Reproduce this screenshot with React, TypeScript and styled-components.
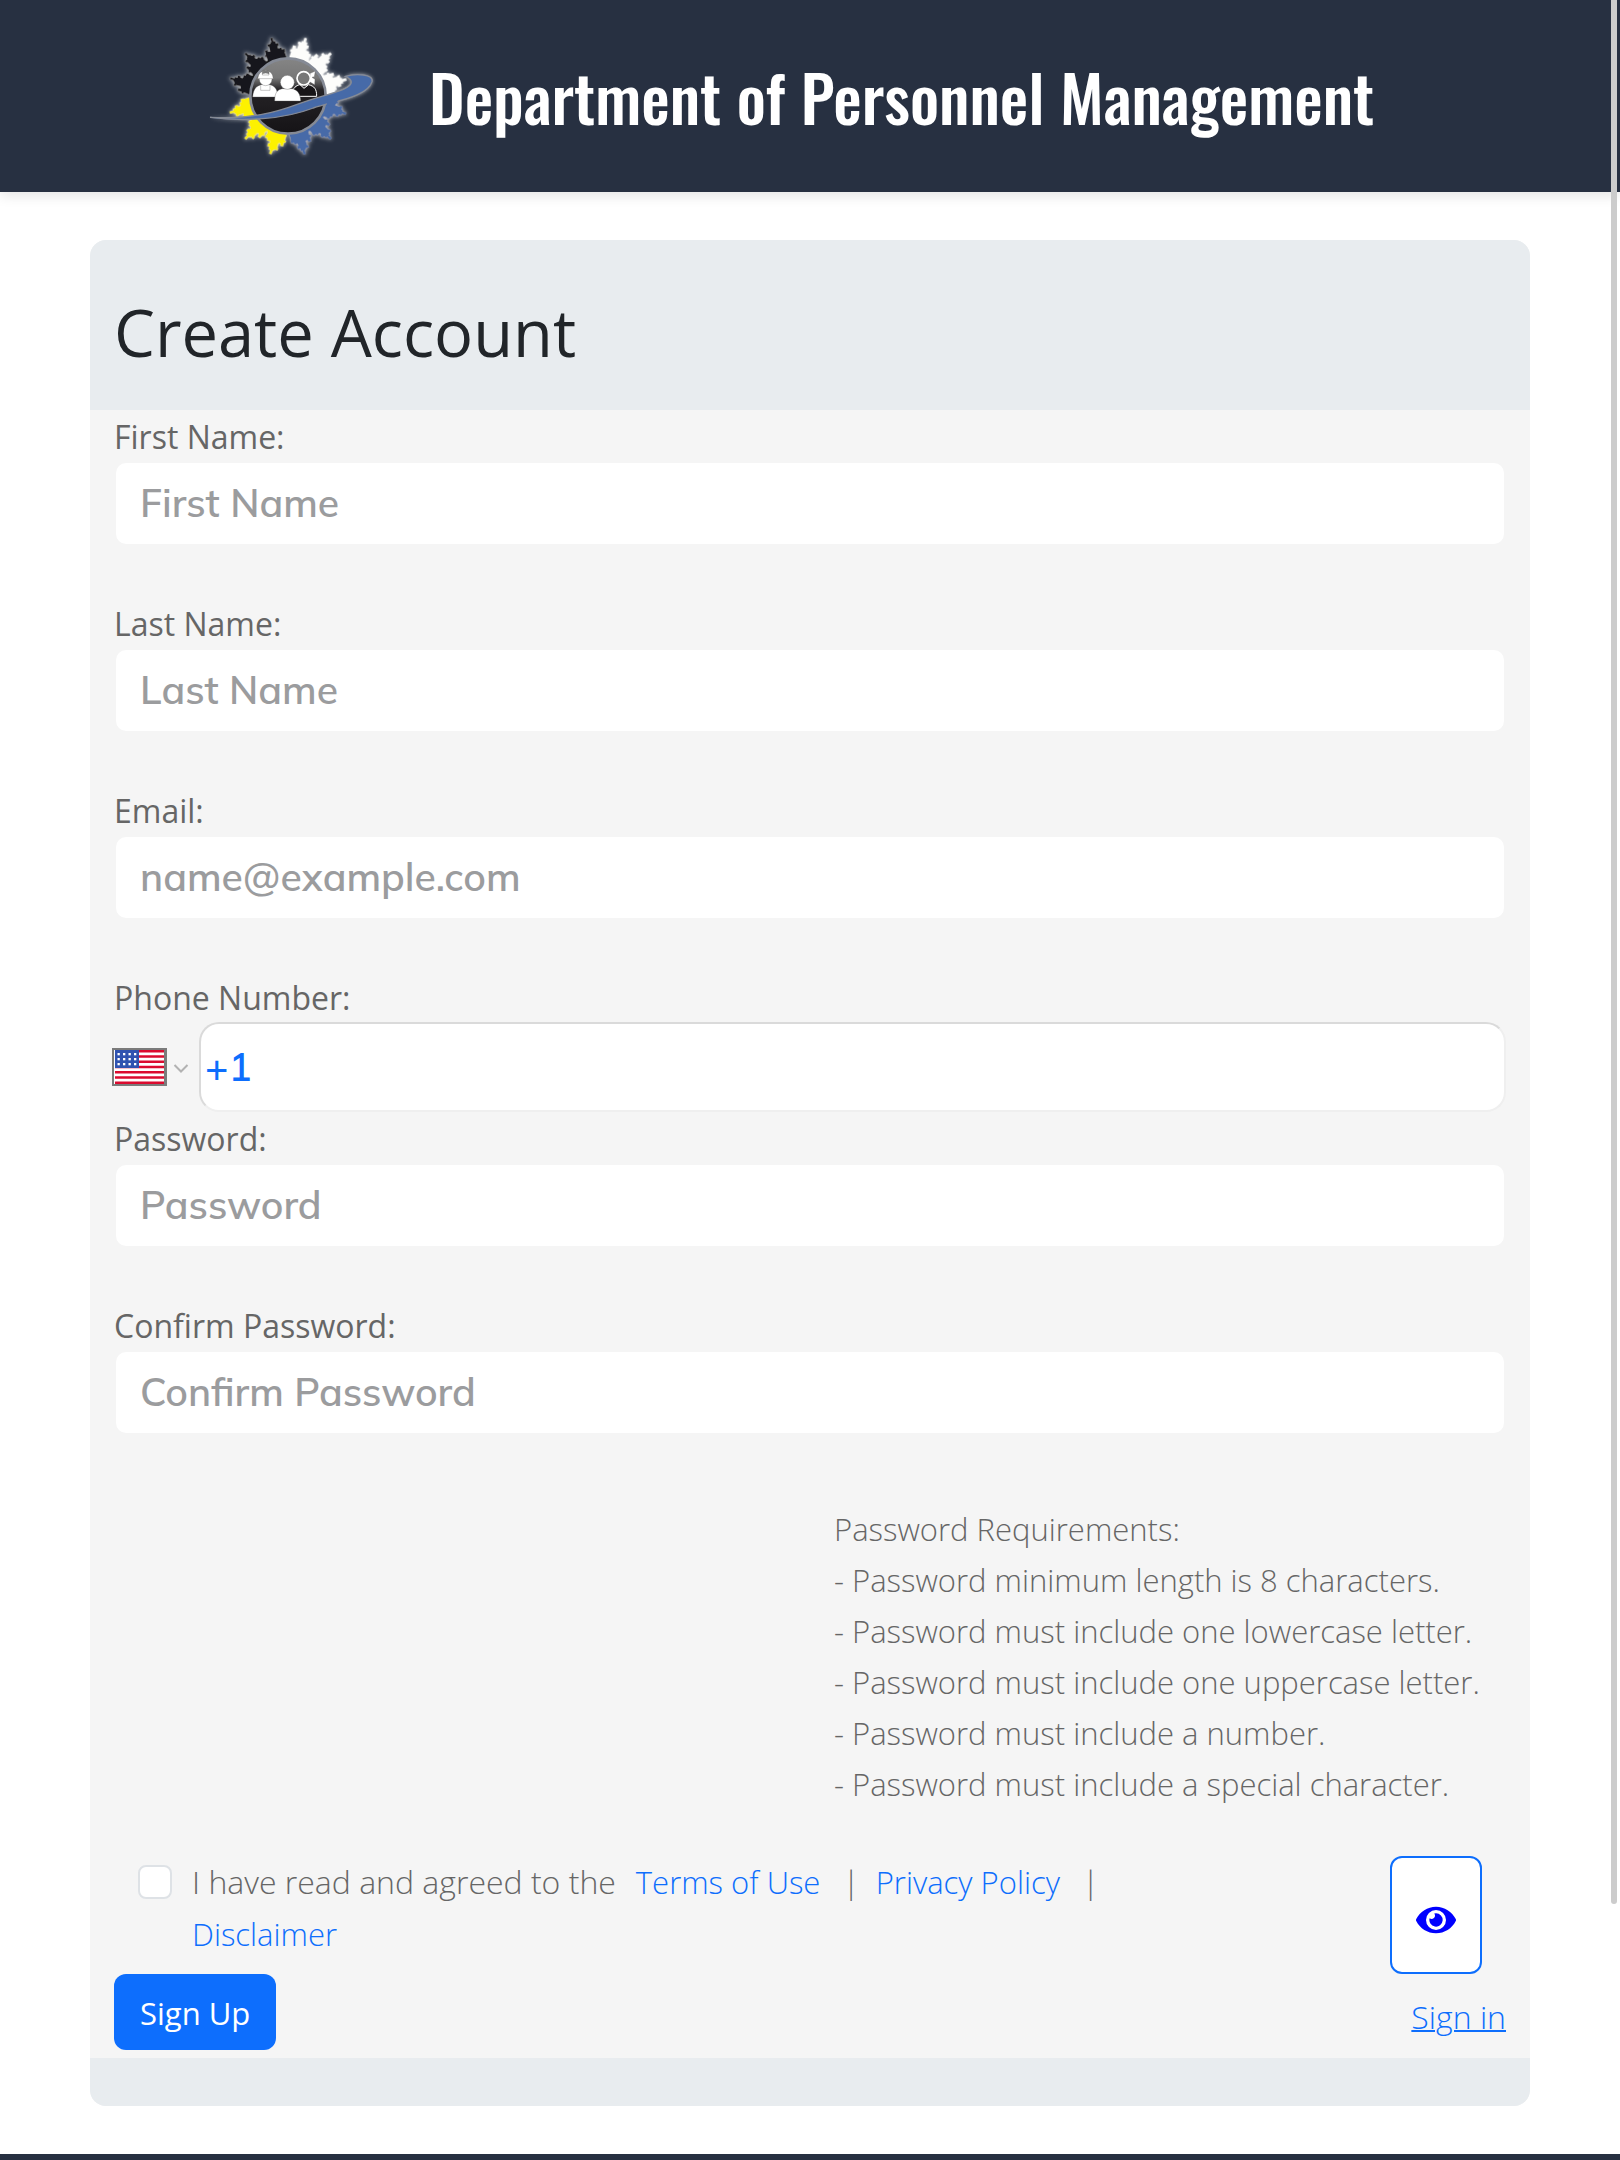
import React, { useState } from "react";
import styled, { createGlobalStyle } from "styled-components";

const bodyFont = `"Open Sans", "Noto Sans", sans-serif`;
const inputFont = `"Muli", "Mulish", "Nunito Sans", "Nunito", "Open Sans", "Noto Sans", sans-serif`;

const GlobalStyle = createGlobalStyle`
  *, *::before, *::after { box-sizing: border-box; }
  body {
    margin: 0;
    background: #fff;
    color: #666;
    font-family: ${bodyFont};
    font-size: 32px;
    line-height: 51px;
    overflow: hidden;
  }
`;

const Masthead = styled.header`
  background: #273041;
  box-shadow: 0 4px 12px rgba(0, 0, 0, 0.1);
`;

const Container = styled.div`
  max-width: 1440px;
  margin: 0 auto;
`;

const Brand = styled(Container)`
  display: flex;
  align-items: center;
  gap: 52px;
  height: 192px;
  padding-left: 117px;
`;

const SiteName = styled.h1`
  margin: 0;
  color: #fff;
  font-family: "Oswald", "Roboto Condensed", "Liberation Sans Narrow", sans-serif;
  font-size: 64px;
  font-weight: 500;
  line-height: 76px;
  white-space: nowrap;
`;

const Main = styled.main`
  padding: 48px 0;
`;

const Card = styled.section`
  border-radius: 16px;
  overflow: hidden;
  background: #f5f5f5;
`;

const CardHeader = styled.div`
  padding: 52px 24px 38px;
  background: #e8ecef;
`;

const Title = styled.h2`
  margin: 0;
  color: #212529;
  font-size: 65px;
  font-weight: 400;
  line-height: 80px;
`;

const CardBody = styled.form`
  padding: 0 24px 8px;
`;

const CardFooter = styled.div`
  height: 48px;
  background: #e8ecef;
`;

const Field = styled.div<{ $tight?: boolean }>`
  display: flex;
  flex-direction: column;
  margin-bottom: ${(p) => (p.$tight ? 0 : 51)}px;
`;

const Label = styled.label`
  align-self: flex-start;
  padding-top: 2px;
  line-height: 49px;
`;

const TextInput = styled.input`
  width: 100%;
  height: 85px;
  padding: 0 24px 2px;
  border: 2px solid transparent;
  border-radius: 12px;
  background: #fff;
  background-clip: padding-box;
  color: #333;
  font-family: ${inputFont};
  font-size: 39px;
  font-weight: 600;
  &::placeholder { color: #9b9c9e; opacity: 1; }
`;

const PhoneRow = styled.div`
  display: flex;
  align-items: center;
  gap: 10px;
`;

const Country = styled.div`
  position: relative;
  display: flex;
  align-items: center;
  gap: 6px;
  margin-left: -2px;
`;

const CountrySelect = styled.select`
  position: absolute;
  inset: 0;
  width: 100%;
  opacity: 0;
  cursor: pointer;
`;

const PhoneInput = styled.input`
  flex: 1;
  min-width: 0;
  height: 90px;
  padding: 0 4px 2px;
  border: 2px solid;
  border-color: #dadada #efefef #efefef #dadada;
  border-radius: 20px;
  background: #fff;
  color: #0d6efd;
  font-family: ${inputFont};
  font-size: 39px;
  font-weight: 600;
`;

const Requirements = styled.div`
  width: 50%;
  margin: 0 0 46px auto;
  padding: 18px 0 0 24px;
  font-size: 31px;
  font-weight: 300;
`;

const List = styled.ul`
  margin: 0;
  padding: 0;
  list-style: none;
`;

const ConsentRow = styled.div`
  display: flex;
  justify-content: space-between;
  align-items: flex-start;
  padding: 0 24px;
`;

const Consent = styled.div`
  display: flex;
  align-items: flex-start;
  gap: 20px;
  width: 75%;
  font-weight: 300;
`;

const CheckBox = styled.input`
  appearance: none;
  flex: none;
  width: 34px;
  height: 34px;
  margin: 9px 0 0;
  border: 2px solid #dee2e6;
  border-radius: 8px;
  background: #fff;
  &:checked { background: #0d6efd; border-color: #0d6efd; }
`;

const ConsentLabel = styled.label`
  margin-right: 20px;
`;

const PolicyLink = styled.a`
  color: #0d6efd;
  font-size: 31px;
  text-decoration: none;
`;

const SignInLink = styled.a`
  padding-top: 8px;
  color: #0d6efd;
  font-weight: 300;
  text-decoration-thickness: 2px;
`;

const Separator = styled.span`
  margin: 0 16px 0 22px;
`;

const RevealButton = styled.button`
  display: flex;
  align-items: center;
  justify-content: center;
  width: 92px;
  height: 118px;
  padding: 10px 0 0;
  border: 2px solid #0d6efd;
  border-radius: 12px;
  background: #fff;
  color: #00f;
`;

const Actions = styled.div`
  display: flex;
  align-items: center;
  justify-content: space-between;
`;

const SubmitButton = styled.button`
  height: 76px;
  padding: 2px 26px 0;
  border: 0;
  border-radius: 12px;
  background: #0d6efd;
  color: #fff;
  font: inherit;
  font-size: 31px;
`;

const PageFooter = styled.footer`
  height: 6px;
  background: #273041;
`;

const ScrollThumb = styled.div`
  position: fixed;
  top: 0;
  right: 3px;
  width: 6px;
  height: calc(100vh - 256px);
  border-radius: 0 0 3px 3px;
  background: #ccc;
`;

const PETAL =
  "M-30-108V-130H-34V-137H-30V-150H-20V-144H-15V-158H-18V-166H-8V-170H-4V-182H4V-170H9V-162H16V-152H12V-146H22V-140H30V-130H28V-108Z";

const quadrants = [
  { fill: "#fdfdfb", start: 0 },
  { fill: "#466aa8", start: 90 },
  { fill: "#fdf100", start: 180 },
  { fill: "#17151a", start: 270 },
];

function Logo() {
  return (
    <svg width="170" height="126" viewBox="51 39 510 378" role="img" aria-label="Department logo">
      <defs>
        <linearGradient id="globe" x1="0" y1="0" x2="0" y2="1">
          <stop offset="0" stopColor="#858585" />
          <stop offset="0.26" stopColor="#777" />
          <stop offset="0.42" stopColor="#252326" />
          <stop offset="1" stopColor="#151316" />
        </linearGradient>
        <filter id="glow" x="-20%" y="-20%" width="140%" height="140%">
          <feDropShadow dx="0" dy="0" stdDeviation="6" floodColor="#fff" floodOpacity="0.8" />
        </filter>
      </defs>
      <g filter="url(#glow)">
        {quadrants.map((q) => (
          <g key={q.start} fill={q.fill} transform={`translate(294 228) rotate(${q.start})`}>
            <path d="M5-100V-122H20A124 124 0 0 1 122-20V-5H100Z" />
            <path d={PETAL} transform="rotate(17)" />
            <path d={PETAL} transform="rotate(45)" />
            <path d={PETAL} transform="rotate(74)" />
          </g>
        ))}
        <path
          fill="#466aa8"
          d="M60 292C180 299 255 278 330 250C410 222 485 210 484 186C483 175 472 172 466 169C500 160 552 163 546 185C532 232 430 243 370 264C280 299 160 305 60 292Z"
        />
      </g>
      <circle cx="294" cy="228" r="113" fill="url(#globe)" stroke="#858a95" strokeWidth="8" />
      <g fill="#fff" stroke="#555" strokeWidth="1">
        <path d="M188 231C190 205 200 197 215 194H239C254 197 262 206 264 231Z" />
        <path d="M212 196V211H240V196" />
        <circle cx="227" cy="178" r="19" />
        <path d="M203 176Q206 152 227 152Q248 152 250 176ZM217 153V165H237V153" />
        <path fill="#171518" stroke="#fff" strokeWidth="3" d="M306 216C312 199 324 195 330 194L342 205L356 194C373 199 380 206 380 229H330" />
        <path d="M361 160L376 153L373 170L366 172L375 178L374 194L360 186" />
        <circle cx="341" cy="175" r="20" fill="#777" stroke="#fff" strokeWidth="5" />
        <path d="M254 243C254 216 263 209 277 206H307C323 211 331 220 332 243Z" />
        <circle cx="292" cy="187" r="21" />
      </g>
      <path
        fill="#466aa8"
        stroke="#858a95"
        strokeWidth="4"
        d="M60 292C180 299 255 278 330 250C410 222 485 210 484 186C483 175 472 172 466 169C500 160 552 163 546 185C532 232 430 243 370 264C280 299 160 305 60 292Z"
      />
      <path fill="#466aa8" d="M412 240L450 232L430 262L410 256Z" />
    </svg>
  );
}

function UsFlag() {
  const stripes = [0, 1, 2, 3, 4, 5, 6];
  return (
    <svg width="55" height="38" viewBox="0 0 55 38" aria-hidden="true">
      <rect width="55" height="38" fill="#7b7b7b" />
      <rect x="2" y="2" width="50" height="34" fill="#fff" />
      {stripes.map((i) => (
        <rect key={i} x="3" y={2 + i * 5.25} width="49" height="2.5" fill="#db0b2f" />
      ))}
      <rect x="3" y="2" width="24" height="18" fill="#3053b0" />
      {[0, 1, 2].map((r) =>
        [0, 1, 2, 3].map((c) => (
          <rect key={`${r}-${c}`} x={5.5 + c * 5.5} y={5 + r * 5} width="2.3" height="2.3" fill="#fff" />
        ))
      )}
    </svg>
  );
}

function Chevron() {
  return (
    <svg width="16" height="12" viewBox="0 0 16 12" aria-hidden="true">
      <path d="M1.5 4L8 10.5L14.5 4" fill="none" stroke="#b2b2b2" strokeWidth="2" />
    </svg>
  );
}

function EyeIcon() {
  return (
    <svg width="40" height="36" viewBox="0 0 576 512" fill="currentColor" aria-hidden="true">
      <path d="M572.52 241.4C518.29 135.59 410.93 64 288 64S57.68 135.64 3.48 241.41a32.35 32.35 0 0 0 0 29.19C57.71 376.41 165.07 448 288 448s230.32-71.64 284.52-177.41a32.35 32.35 0 0 0 0-29.19zM288 400a144 144 0 1 1 144-144 143.93 143.93 0 0 1-144 144zm0-240a95.31 95.31 0 0 0-25.31 3.79 47.85 47.85 0 0 1-66.9 66.9A95.78 95.78 0 1 0 288 160z" />
    </svg>
  );
}

type FieldProps = { id: string; label: string; placeholder: string; type?: string };

function FormField({ id, label, placeholder, type = "text" }: FieldProps) {
  return (
    <Field>
      <Label htmlFor={id}>{label}</Label>
      <TextInput id={id} name={id} type={type} placeholder={placeholder} />
    </Field>
  );
}

const rules = [
  "- Password minimum length is 8 characters.",
  "- Password must include one lowercase letter.",
  "- Password must include one uppercase letter.",
  "- Password must include a number.",
  "- Password must include a special character.",
];

export default function App() {
  const [visible, setVisible] = useState(false);
  const [phone, setPhone] = useState("+1");
  const passwordType = visible ? "text" : "password";

  return (
    <>
      <GlobalStyle />
      <Masthead>
        <Brand>
          <Logo />
          <SiteName>Department of Personnel Management</SiteName>
        </Brand>
      </Masthead>
      <Main>
        <Container>
          <Card>
            <CardHeader>
              <Title>Create Account</Title>
            </CardHeader>
            <CardBody onSubmit={(e) => e.preventDefault()}>
              <FormField id="firstName" label="First Name:" placeholder="First Name" />
              <FormField id="lastName" label="Last Name:" placeholder="Last Name" />
              <FormField id="email" label="Email:" placeholder="name@example.com" type="email" />
              <Field $tight>
                <Label htmlFor="phone">Phone Number:</Label>
                <PhoneRow>
                  <Country>
                    <UsFlag />
                    <Chevron />
                    <CountrySelect aria-label="Phone number country" defaultValue="US">
                      <option value="US" />
                    </CountrySelect>
                  </Country>
                  <PhoneInput id="phone" type="tel" value={phone} onChange={(e) => setPhone(e.target.value)} />
                </PhoneRow>
              </Field>
              <FormField id="password" label="Password:" placeholder="Password" type={passwordType} />
              <FormField id="confirm" label="Confirm Password:" placeholder="Confirm Password" type={passwordType} />
              <Requirements>
                Password Requirements:
                <List>
                  {rules.map((rule) => (
                    <li key={rule}>{rule}</li>
                  ))}
                </List>
              </Requirements>
              <ConsentRow>
                <Consent>
                  <CheckBox id="consent" type="checkbox" />
                  <div>
                    <ConsentLabel htmlFor="consent">I have read and agreed to the</ConsentLabel>
                    <PolicyLink href="#terms">Terms of Use</PolicyLink>
                    <Separator>|</Separator>
                    <PolicyLink href="#privacy">Privacy Policy</PolicyLink>
                    <Separator>|</Separator> <PolicyLink href="#disclaimer">Disclaimer</PolicyLink>
                  </div>
                </Consent>
                <RevealButton type="button" aria-label="Show password" onClick={() => setVisible(!visible)}>
                  <EyeIcon />
                </RevealButton>
              </ConsentRow>
              <Actions>
                <SubmitButton type="submit">Sign Up</SubmitButton>
                <SignInLink href="#signin">Sign in</SignInLink>
              </Actions>
            </CardBody>
            <CardFooter />
          </Card>
        </Container>
      </Main>
      <PageFooter />
      <ScrollThumb />
    </>
  );
}
